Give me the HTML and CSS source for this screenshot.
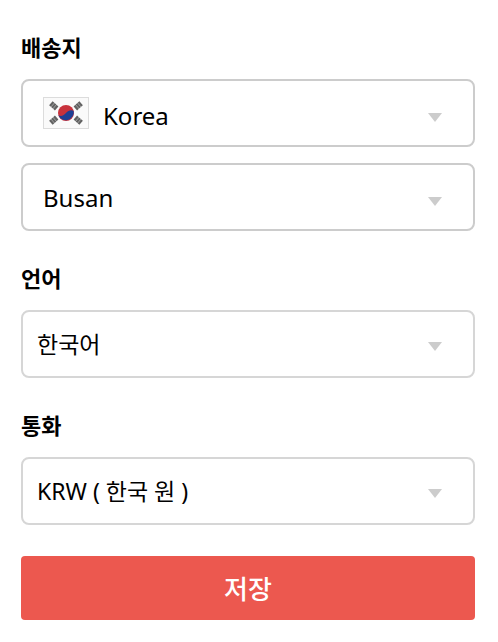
FILE: index.html
```html
<!DOCTYPE html>
<html lang="ko">
<head>
    <meta charset="UTF-8">
    <meta name="viewport" content="width=device-width, initial-scale=1.0">
    <title>배송지 설정</title>
    <link rel="stylesheet" href="styles.css">
</head>
<body>
    <form class="settings">
        <!-- Shipping address -->
        <div class="group">
            <label class="title" for="country">배송지</label>
            <div class="select-box ship">
                <svg class="flag" viewBox="0 0 46 32" aria-hidden="true">
                    <rect x="0.5" y="0.5" width="45" height="31" fill="#fafafa" stroke="#dcdcdc"/>
                    <circle cx="23" cy="16" r="8" fill="#c8323c"/>
                    <path d="M15.300 18C17 19.500 20 19.500 23 16C25.500 13 28.500 12.500 30.700 14A8 8 0 0 1 15.300 18Z" fill="#1f3f94"/>
                    <g stroke="#626262" stroke-width="2.400">
                        <path d="M7 9l3.500-4M9 10.800l3.500-4M11 12.600l3.500-4"/>
                        <path d="M39 9l-3.500-4M37 10.800l-3.500-4M35 12.600l-3.500-4"/>
                        <path d="M7 23l3.500 4M9 21.200l3.500 4M11 19.400l3.500 4"/>
                        <path d="M39 23l-3.500 4M37 21.200l-3.500 4M35 19.400l-3.500 4"/>
                    </g>
                </svg>
                <select id="country" class="with-flag">
                    <option>Korea</option>
                </select>
            </div>
            <div class="select-box ship">
                <select id="city" class="city" aria-label="Busan">
                    <option>Busan</option>
                </select>
            </div>
        </div>

        <!-- Language -->
        <div class="group">
            <label class="title" for="language">언어</label>
            <div class="select-box">
                <select id="language">
                    <option>한국어</option>
                </select>
            </div>
        </div>

        <!-- Currency -->
        <div class="group">
            <label class="title" for="currency">통화</label>
            <div class="select-box">
                <select id="currency">
                    <option>KRW ( 한국 원 )</option>
                </select>
            </div>
        </div>

        <button type="submit" class="save">저장</button>
    </form>
</body>
</html>
```
FILE: styles.css
```css
body {
    font-family: "Noto Sans", "Noto Sans CJK KR", sans-serif;
    background-color: #fff;
    margin: 0;
    color: #000;
}
.settings {
    padding: 31px 23px 22px 21px;
}
.group {
    margin-bottom: 31px;
}
.title {
    display: block;
    font-size: 22px;
    font-weight: bold;
    line-height: 32px;
    margin-bottom: 16px;
}
.select-box {
    position: relative;
    margin-bottom: 16px;
}
.select-box:last-child {
    margin-bottom: 0;
}
/* Dropdown arrow */
.select-box::after {
    content: "";
    position: absolute;
    top: 32px;
    right: 33px;
    border: 7px solid transparent;
    border-top: 9px solid #ccc;
    border-bottom: 0;
    pointer-events: none;
}
.ship::after {
    top: 34px;
}
select {
    appearance: none;
    display: block;
    width: 100%;
    height: 68px;
    padding: 0 60px 0 14px;
    border: 2px solid #d6d6d6;
    border-radius: 8px;
    background-color: #fff;
    color: #000;
    font-family: inherit;
    font-size: 23px;
}
.ship select {
    border-color: #ccc;
    font-size: 24px;
}
.ship .city {
    padding-left: 20px;
}
.ship .with-flag {
    padding-top: 4px;
    padding-left: 80px;
}
.flag {
    position: absolute;
    top: 18px;
    left: 22px;
    width: 46px;
    height: 32px;
}
.save {
    display: block;
    width: 100%;
    height: 64px;
    padding: 0;
    border: 0;
    border-radius: 4px;
    background-color: #ec584f;
    color: #fff;
    font-family: inherit;
    font-size: 26px;
    font-weight: 500;
    cursor: pointer;
}
```
